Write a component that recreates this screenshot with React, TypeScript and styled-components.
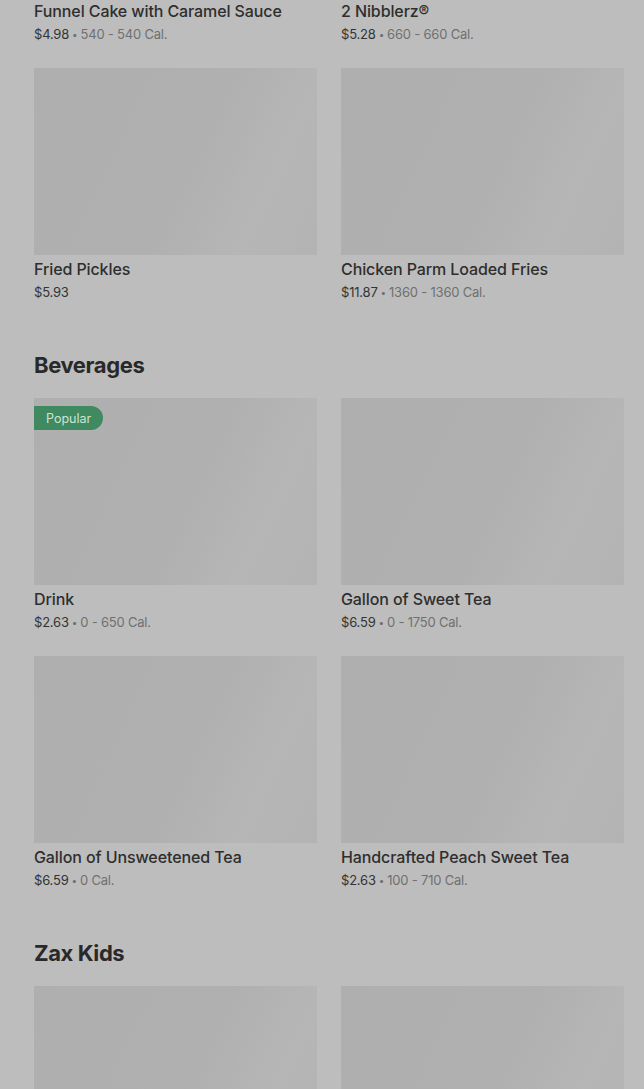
import React from 'react';
import styled, { createGlobalStyle } from 'styled-components';

const GlobalStyle = createGlobalStyle`
  html, body {
    margin: 0;
    padding: 0;
    background: #bdbdbd;
    overflow: hidden;
  }
  body {
    font-family: Inter, 'Noto Sans', sans-serif;
    -webkit-font-smoothing: antialiased;
  }
`;

interface Item {
  name?: string;
  price?: string;
  cal?: string;
  popular?: boolean;
}

interface Section {
  title?: string;
  items: Item[];
}

const sections: Section[] = [
  {
    // heading and first images are scrolled above the fold
    items: [
      { name: 'Funnel Cake with Caramel Sauce', price: '$4.98', cal: '540 - 540 Cal.' },
      { name: '2 Nibblerz®', price: '$5.28', cal: '660 - 660 Cal.' },
      { name: 'Fried Pickles', price: '$5.93' },
      { name: 'Chicken Parm Loaded Fries', price: '$11.87', cal: '1360 - 1360 Cal.' },
    ],
  },
  {
    title: 'Beverages',
    items: [
      { name: 'Drink', price: '$2.63', cal: '0 - 650 Cal.', popular: true },
      { name: 'Gallon of Sweet Tea', price: '$6.59', cal: '0 - 1750 Cal.' },
      { name: 'Gallon of Unsweetened Tea', price: '$6.59', cal: '0 Cal.' },
      { name: 'Handcrafted Peach Sweet Tea', price: '$2.63', cal: '100 - 710 Cal.' },
    ],
  },
  {
    title: 'Zax Kids',
    // only the photos reach into the viewport
    items: [{}, {}],
  },
];

const Page = styled.main`
  /* page is scrolled down: first row of photos starts above the top edge */
  margin-top: -190px;
  padding: 0 20px 0 34px;
  display: flex;
  flex-direction: column;
  gap: 47px;
`;

const SectionBlock = styled.section`
  display: flex;
  flex-direction: column;
  gap: 17px;
`;

const Heading = styled.h2`
  margin: 0;
  font-size: 22px;
  line-height: 32px;
  font-weight: 700;
  letter-spacing: -0.4px;
  color: #292929;
`;

const Grid = styled.div`
  display: grid;
  grid-template-columns: 1fr 1fr;
  column-gap: 24px;
  row-gap: 24px;
`;

const Card = styled.div`
  display: flex;
  flex-direction: column;
`;

const Photo = styled.div`
  position: relative;
  height: 187px;
  background: linear-gradient(115deg, #afafaf 0%, #b0b0b0 55%, #b6b6b6 78%, #b3b3b3 100%);
`;

const Badge = styled.span`
  position: absolute;
  top: 8px;
  left: 0;
  height: 24px;
  padding: 0 12px;
  display: flex;
  align-items: center;
  border-radius: 0 12px 12px 0;
  background: #3f8a61;
  color: #cfe3d5;
  font-size: 12.5px;
  font-weight: 400;
`;

const Name = styled.div`
  margin-top: 4px;
  font-size: 16px;
  line-height: 20px;
  font-weight: 500;
  letter-spacing: -0.1px;
  color: #2e2e2e;
`;

const Meta = styled.div`
  margin-top: 3px;
  height: 20px;
  font-size: 13px;
  line-height: 20px;
  letter-spacing: -0.2px;
  color: #343434;
`;

const Cal = styled.span`
  color: #707070;
`;

const Dot = styled.span`
  margin: 0 3px;
  font-size: 10px;
  line-height: 0;
  vertical-align: 1px;
  color: #707070;
`;

function MenuCard({ item }: { item: Item }) {
  return (
    <Card>
      <Photo>{item.popular && <Badge>Popular</Badge>}</Photo>
      {item.name && <Name>{item.name}</Name>}
      {item.price && (
        <Meta>
          {item.price}
          {item.cal && (
            <>
              <Dot>•</Dot>
              <Cal>{item.cal}</Cal>
            </>
          )}
        </Meta>
      )}
    </Card>
  );
}

export default function App() {
  return (
    <>
      <GlobalStyle />
      <Page>
        {sections.map((s, i) => (
          <SectionBlock key={i}>
            {s.title && <Heading>{s.title}</Heading>}
            <Grid>
              {s.items.map((item, j) => (
                <MenuCard key={j} item={item} />
              ))}
            </Grid>
          </SectionBlock>
        ))}
      </Page>
    </>
  );
}
